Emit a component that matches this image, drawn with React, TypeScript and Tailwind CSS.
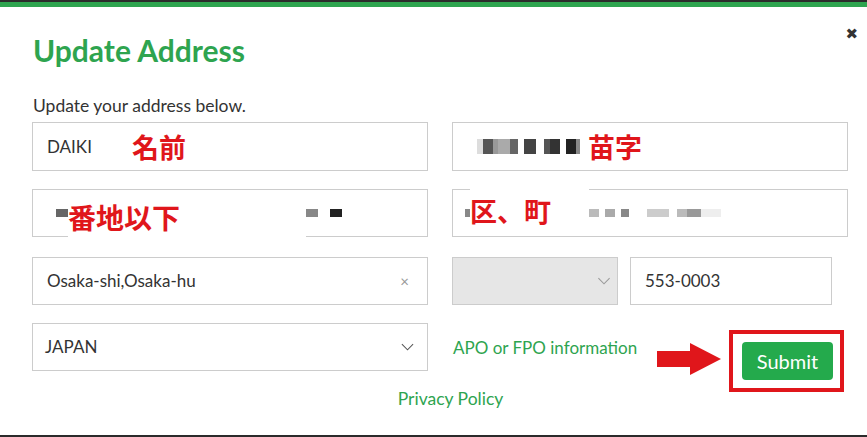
import React from "react";

const GREEN = "text-[#2ea44f]";

const Chevron = ({ className }: { className?: string }) => (
  <svg viewBox="0 0 16 10" className={className} fill="none" stroke="currentColor" strokeWidth="1.3">
    <path d="M1 1.5l7 7 7-7" />
  </svg>
);

// pixelated redaction blocks: [width, shade]
const Pixels = ({ blocks, h = "h-[16px]" }: { blocks: [number, string][]; h?: string }) => (
  <div className={`flex items-center ${h}`}>
    {blocks.map(([w, c], i) => (
      <div key={i} className={`h-[65%] ${c}`} style={{ width: w }} />
    ))}
  </div>
);

const Field = ({
  children,
  className = "",
  bg = "bg-white",
}: {
  children?: React.ReactNode;
  className?: string;
  bg?: string;
}) => (
  <div className={`flex items-center border border-[#cccccc] text-[17px] text-[#333] ${bg} ${className}`}>
    {children}
  </div>
);

const Note = ({ children, className = "" }: { children: React.ReactNode; className?: string }) => (
  <span
    className={`font-bold text-[#e0161b] ${className}`}
    style={{ fontFamily: '"Noto Sans CJK JP", sans-serif' }}
  >
    {children}
  </span>
);

export default function App() {
  return (
    <div className="h-[437px] w-[867px] overflow-hidden bg-white" style={{ fontFamily: "Lato, 'Open Sans', sans-serif" }}>
      <div className="flex h-full flex-col border-b-2 border-[#2b2b2b]">
        <div className="h-[2px] bg-[#2b2b2b]" />
        <div className="h-[5px] bg-[#2ea44f]" />

        <div className="relative px-[32px]">
          <div className="absolute right-[9px] top-[20px] text-[15px] leading-none text-[#333]" style={{ fontFamily: '"DejaVu Sans", sans-serif' }}>
            ✖
          </div>

          <h1 className={`mt-[25px] pl-[1px] text-[30px] font-bold leading-[36px] ${GREEN}`}>Update Address</h1>
          <p className="mt-[27px] pl-[1px] text-[17.5px] leading-[21px] text-[#333]">Update your address below.</p>

          <div className="mt-[6px] grid w-[816px] grid-cols-2 gap-x-[24px]">
            <Field className="h-[49px] pl-[14px]">
              <span>DAIKI</span>
              <Note className="ml-[40px] text-[27px] leading-none">名前</Note>
            </Field>
            <Field className="h-[49px] pl-[24px]">
              <Pixels
                h="h-[22px]"
                blocks={[
                  [6, "bg-[#ddd]"], [10, "bg-[#555]"], [5, "bg-[#999]"], [12, "bg-[#aaa]"], [8, "bg-[#666]"],
                  [6, "bg-white"], [12, "bg-[#444]"], [8, "bg-white"], [6, "bg-[#555]"], [10, "bg-[#333]"],
                  [6, "bg-white"], [10, "bg-[#222]"], [4, "bg-[#888]"],
                ]}
              />
              <Note className="ml-[8px] text-[27px] leading-none">苗字</Note>
            </Field>

            <Field className="mt-[18px] h-[48px] pl-[23px]">
              <Pixels blocks={[[12, "bg-[#666]"]]} h="h-[12px]" />
              <div className="flex h-[42px] w-[238px] translate-y-[7px] items-start bg-white">
                <Note className="text-[28px] leading-[36px]">番地以下</Note>
              </div>
              <Pixels blocks={[[12, "bg-[#888]"], [12, "bg-white"], [12, "bg-[#222]"]]} h="h-[12px]" />
            </Field>
            <Field className="mt-[18px] h-[48px] pl-[12px]">
              <Pixels blocks={[[5, "bg-[#888]"]]} h="h-[12px]" />
              <div className="flex h-[46px] w-[119px] -translate-y-[3px] items-center bg-white">
                <Note className="text-[27px] leading-none">区、町</Note>
              </div>
              <Pixels
                blocks={[
                  [10, "bg-[#bbb]"], [6, "bg-white"], [10, "bg-[#aaa]"], [6, "bg-white"], [8, "bg-[#888]"],
                  [18, "bg-white"], [22, "bg-[#ccc]"], [8, "bg-white"], [10, "bg-[#bbb]"], [14, "bg-[#999]"], [20, "bg-[#eee]"],
                ]}
                h="h-[12px]"
              />
            </Field>

            <Field className="mt-[20px] h-[48px] justify-between pl-[14px] pr-[18px]">
              <span>Osaka-shi,Osaka-hu</span>
              <span className="text-[15px] text-[#999]">×</span>
            </Field>
            <div className="mt-[20px] flex gap-[12px]">
              <Field bg="bg-[#e6e6e6]" className="h-[48px] w-[166px] shrink-0 justify-end pr-[6px]">
                <Chevron className="h-[8px] w-[14px] text-[#999]" />
              </Field>
              <Field className="h-[48px] w-[202px] shrink-0 pl-[14px]">553-0003</Field>
            </div>

            <Field className="mt-[18px] h-[48px] justify-between pl-[12px] pr-[12px]">
              <span>JAPAN</span>
              <Chevron className="h-[8px] w-[15px] text-[#555]" />
            </Field>
            <div className="mt-[18px] flex items-start">
              <a className={`mt-[12px] pl-[1px] text-[17px] ${GREEN}`}>APO or FPO information</a>
              <div className="ml-auto mr-[4px] flex items-start">
                <svg viewBox="0 0 66 34" className="mt-[19px] h-[34px] w-[66px]">
                  <path d="M1 9h33V1l31 16-31 16v-8H1z" fill="#e0161b" />
                </svg>
                <div className="ml-[7px] mt-[7px] border-[4px] border-[#e0161b] py-[8px] pl-[9px] pr-[7px]">
                  <button className="h-[38px] w-[91px] rounded-[4px] bg-[#24aa4c] text-[20px] text-white">Submit</button>
                </div>
              </div>
            </div>
          </div>

          <div className="-mt-[4px] flex justify-center pl-[34px]">
            <a className={`text-[17.5px] leading-[21px] ${GREEN}`}>Privacy Policy</a>
          </div>
        </div>
      </div>
    </div>
  );
}
